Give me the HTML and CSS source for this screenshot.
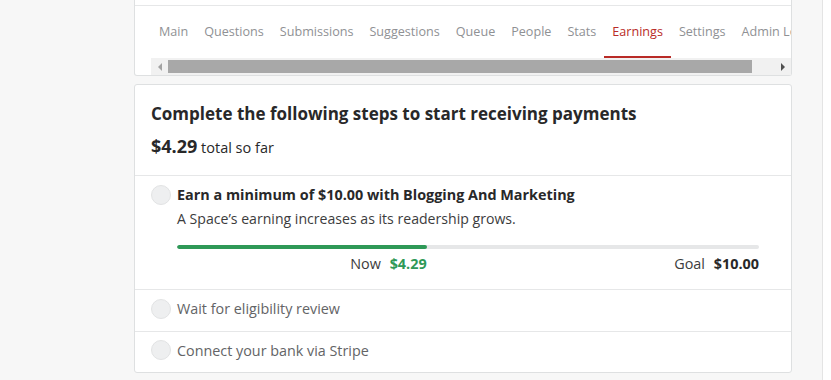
FILE: index.html
```html
<!DOCTYPE html>
<html>
<head>
<meta charset="utf-8">
<link rel="stylesheet" href="styles.css">
</head>
<body>
<div class="page">
  <div class="column">
    <div class="card nav-card">
      <div class="prev-section"></div>
      <div class="tabs-wrap">
        <div class="tabs">
          <a class="tab">Main</a>
          <a class="tab">Questions</a>
          <a class="tab">Submissions</a>
          <a class="tab">Suggestions</a>
          <a class="tab">Queue</a>
          <a class="tab">People</a>
          <a class="tab">Stats</a>
          <a class="tab active">Earnings</a>
          <a class="tab">Settings</a>
          <a class="tab">Admin Log</a>
        </div>
        <div class="hscroll">
          <span class="arrow left"></span>
          <span class="thumb"></span>
          <span class="arrow right"></span>
        </div>
      </div>
    </div>

    <div class="card steps-card">
      <div class="steps-head">
        <h1 class="steps-title">Complete the following steps to start receiving payments</h1>
        <div class="total"><strong>$4.29</strong> total so far</div>
      </div>
      <div class="step step-main">
        <span class="check"></span>
        <div class="step-body">
          <div class="step-title">Earn a minimum of $10.00 with Blogging And Marketing</div>
          <div class="step-desc">A Space’s earning increases as its readership grows.</div>
          <div class="progress">
            <div class="progress-fill" style="width: 42.9%"></div>
          </div>
          <div class="progress-labels">
            <div class="now" style="width: 42.9%">Now <strong>$4.29</strong></div>
            <div class="goal">Goal <strong>$10.00</strong></div>
          </div>
        </div>
      </div>
      <div class="step">
        <span class="check"></span>
        <div class="step-text">Wait for eligibility review</div>
      </div>
      <div class="step">
        <span class="check"></span>
        <div class="step-text">Connect your bank via Stripe</div>
      </div>
    </div>
  </div>
  <div class="side-strip"></div>
</div>
</body>
</html>
```

FILE: styles.css
```css
* { box-sizing: border-box; }
html, body { margin: 0; padding: 0; }
body {
  background: #f7f7f7;
  font-family: "Open Sans", "Noto Sans", sans-serif;
  color: #282829;
  height: 380px;
  overflow: hidden;
}
.page {
  display: flex;
  height: 380px;
}
.column {
  margin-left: 134px;
  width: 658px;
  display: flex;
  flex-direction: column;
  gap: 8px;
}
.card {
  background: #fff;
  border: 1px solid #dee0e1;
  border-radius: 3px;
}
.nav-card {
  border-top: none;
  border-radius: 0 0 3px 3px;
}
.prev-section {
  height: 6px;
  border-bottom: 1px solid #e6e7e8;
}
.tabs-wrap {
  margin-left: 16px;
  overflow: hidden;
}
.tabs {
  display: flex;
  white-space: nowrap;
  height: 52px;
}
.tab {
  display: flex;
  align-items: center;
  padding: 1px 8px 0;
  font-size: 12.6px;
  color: #8f9194;
  border-bottom: 2px solid transparent;
  flex: none;
}
.tab.active {
  color: #b92b27;
  border-bottom-color: #b92b27;
}
.hscroll {
  display: flex;
  align-items: center;
  height: 17px;
  background: #f1f1f1;
}
.arrow {
  width: 17px;
  height: 17px;
  display: flex;
  align-items: center;
  justify-content: center;
  flex: none;
}
.arrow.left::before {
  content: "";
  border-style: solid;
  border-width: 4px 4px 4px 0;
  border-color: transparent #a3a3a3 transparent transparent;
}
.arrow.right {
  margin-left: auto;
}
.arrow.right::before {
  content: "";
  border-style: solid;
  border-width: 4px 0 4px 4px;
  border-color: transparent transparent transparent #505050;
}
.thumb {
  height: 13px;
  width: 584px;
  background: #a8a8a8;
  flex: none;
}

.steps-card {
  height: 289px;
}
.steps-head {
  padding: 16px 16px 0;
  height: 91px;
  border-bottom: 1px solid #e6e7e8;
}
.steps-title {
  margin: 0;
  font-size: 17px;
  font-weight: 700;
  line-height: 26px;
}
.total {
  margin-top: 7px;
  font-size: 14.5px;
  line-height: 24px;
}
.total strong {
  font-size: 18px;
}
.step {
  display: flex;
  align-items: center;
  gap: 6px;
  padding: 0 32px 4px 16px;
  height: 42px;
  border-bottom: 1px solid #e6e7e8;
  font-size: 14.35px;
}
.step:last-child {
  border-bottom: none;
  height: 40px;
  padding-bottom: 4px;
}
.step-main {
  align-items: flex-start;
  height: 114px;
  padding-top: 9px;
  padding-bottom: 0;
}
.check {
  width: 20px;
  height: 20px;
  border-radius: 50%;
  background: #eeeff0;
  border: 1px solid #e2e3e4;
  flex: none;
}
.step-main .check {
  margin-top: 0;
}
.step-body {
  flex: 1;
}
.step-title {
  font-weight: 700;
  line-height: 20px;
  font-size: 14.4px;
}
.step-desc {
  margin-top: 4px;
  line-height: 20px;
  font-size: 14.1px;
  color: #3c3c3d;
}
.progress {
  margin-top: 16px;
  height: 4px;
  border-radius: 2px;
  background: #e6e7e8;
  overflow: hidden;
}
.progress-fill {
  height: 100%;
  background: #2e9957;
  border-radius: 2px;
}
.progress-labels {
  display: flex;
  margin-top: 4px;
  line-height: 22px;
  font-size: 14.4px;
}
.now {
  text-align: right;
  color: #3c3c3d;
  flex: none;
}
.now strong {
  color: #2e9957;
  margin-left: 5px;
}
.goal {
  margin-left: auto;
  color: #3c3c3d;
}
.goal strong {
  color: #282829;
  margin-left: 5px;
}
.step-text {
  color: #636466;
}
.side-strip {
  margin-left: auto;
  width: 9px;
  background: #fff;
  border-left: 1px solid #e4e4e4;
}
```
